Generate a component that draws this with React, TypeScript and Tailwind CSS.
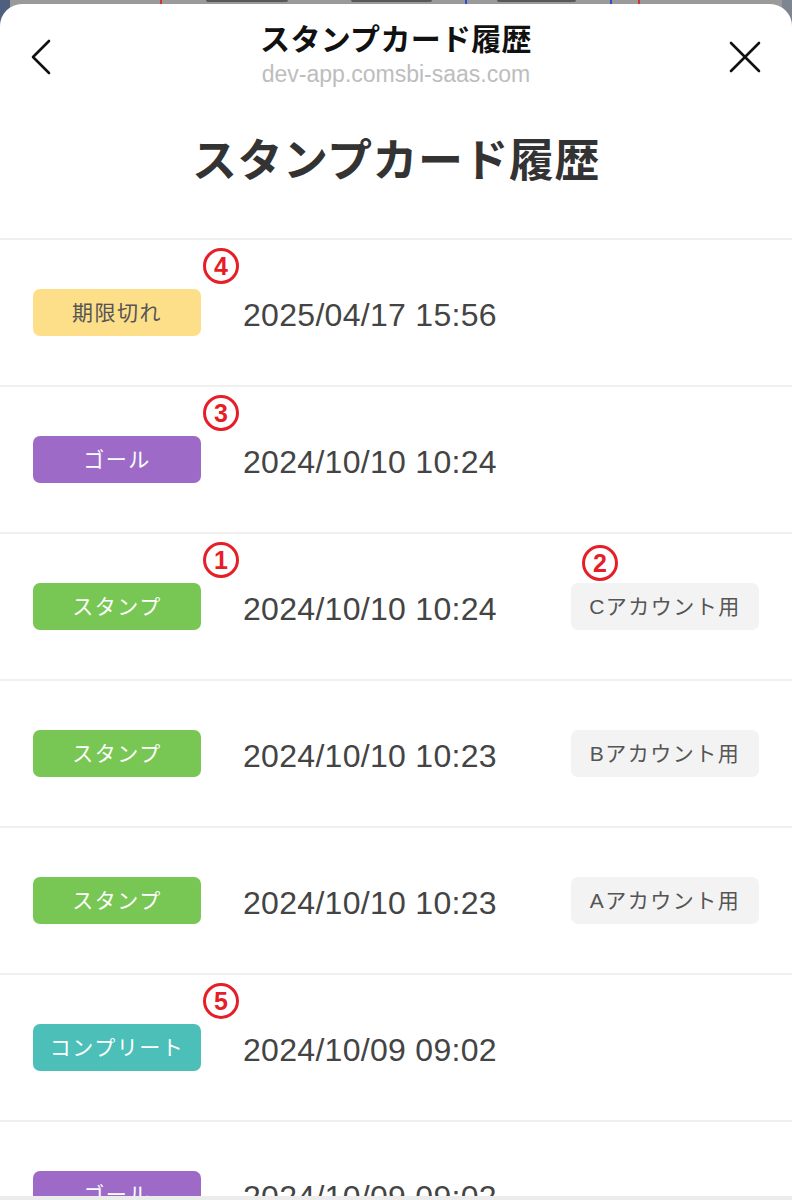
import React from "react";

type Row = {
  label: string;
  tone: string;
  date: string;
  account?: string;
  mark?: string;
  accountMark?: string;
};

const rows: Row[] = [
  { label: "期限切れ", tone: "bg-[#fddf8a] text-[#555555]", date: "2025/04/17 15:56", mark: "4" },
  { label: "ゴール", tone: "bg-[#9d6bc7] text-white", date: "2024/10/10 10:24", mark: "3" },
  { label: "スタンプ", tone: "bg-[#78c755] text-white", date: "2024/10/10 10:24", account: "Cアカウント用", mark: "1", accountMark: "2" },
  { label: "スタンプ", tone: "bg-[#78c755] text-white", date: "2024/10/10 10:23", account: "Bアカウント用" },
  { label: "スタンプ", tone: "bg-[#78c755] text-white", date: "2024/10/10 10:23", account: "Aアカウント用" },
  { label: "コンプリート", tone: "bg-[#4bbfb8] text-white", date: "2024/10/09 09:02", mark: "5" },
  { label: "ゴール", tone: "bg-[#9d6bc7] text-white", date: "2024/10/09 09:02" },
];

const font = { fontFamily: '"Liberation Sans", "Noto Sans CJK JP", sans-serif' };

const Mark = ({ n, className }: { n: string; className: string }) => (
  <span
    className={`absolute w-[36px] h-[36px] rounded-full border-[3px] border-[#e61e28] text-[#e61e28] font-bold text-[25px] leading-none flex items-center justify-center ${className}`}
  >
    {n}
  </span>
);

const HistoryRow = ({ row }: { row: Row }) => (
  <div className="relative h-[147px] border-t-2 border-[#f0f0f0] flex items-center pl-[33px] pr-[33px]">
    {row.mark && <Mark n={row.mark} className="left-[203px] top-[8px]" />}
    {row.accountMark && <Mark n={row.accountMark} className="left-[582px] top-[11px]" />}
    <span className={`w-[168px] h-[47px] rounded-[7px] flex items-center justify-center text-[21px] tracking-[1.5px] ${row.tone}`}>
      {row.label}
    </span>
    <span className="ml-[42px] mt-[4px] text-[32px] text-[#444444] tracking-[0.3px]">{row.date}</span>
    {row.account && (
      <span className="ml-auto w-[188px] h-[47px] rounded-[7px] bg-[#f3f3f3] text-[#555555] text-[21px] tracking-[1.5px] flex items-center justify-center">
        {row.account}
      </span>
    )}
  </div>
);

export default function App() {
  return (
    <div className="w-[792px] h-[1200px] overflow-hidden bg-[#9a9a9a] flex flex-col" style={font}>
      <div className="relative h-[4px] shrink-0">
        <span className="absolute left-0 top-0 h-[30px] w-[10px] bg-[#4e5f80]" />
        <span className="absolute left-[160px] top-0 h-[4px] w-[2px] bg-[#d0342c]" />
        <span className="absolute left-[206px] top-0 h-[2px] w-[82px] rounded-b bg-[#555a55]" />
        <span className="absolute left-[351px] top-0 h-[2px] w-[81px] rounded-b bg-[#555a55]" />
        <span className="absolute left-[465px] top-0 h-[4px] w-[2px] bg-[#2a4fd0]" />
        <span className="absolute left-[497px] top-0 h-[2px] w-[79px] rounded-b bg-[#555a55]" />
        <span className="absolute left-[610px] top-0 h-[4px] w-[2px] bg-[#2a4fd0]" />
        <span className="absolute left-[638px] top-0 h-[4px] w-[2px] bg-[#d0342c]" />
        <span className="absolute right-0 top-0 h-[30px] w-[10px] bg-[#7d8590]" />
      </div>
      <div className="relative flex-1 bg-white rounded-t-[22px] flex flex-col overflow-hidden">
        <header className="h-[100px] shrink-0 grid grid-cols-[80px_1fr_80px] items-center">
          <div className="flex justify-start pl-[30px] pt-[6px]">
            <svg width="22" height="36" viewBox="0 0 22 36" fill="none" stroke="#111" strokeWidth="2.6" strokeLinecap="round" strokeLinejoin="round">
              <polyline points="19,2 3,18 19,34" />
            </svg>
          </div>
          <div className="flex flex-col items-center pt-[2px]">
            <h1 className="text-[30px] leading-[34px] font-bold text-[#111111] tracking-[0.3px]">スタンプカード履歴</h1>
            <p className="mt-[3px] text-[23px] leading-[28px] text-[#bdbdbd]">dev-app.comsbi-saas.com</p>
          </div>
          <div className="flex justify-end pr-[30px] pt-[6px]">
            <svg width="34" height="34" viewBox="0 0 34 34" fill="none" stroke="#111" strokeWidth="2.6" strokeLinecap="round">
              <line x1="3" y1="3" x2="31" y2="31" />
              <line x1="31" y1="3" x2="3" y2="31" />
            </svg>
          </div>
        </header>
        <h2 className="mt-[28px] mb-[46px] text-center text-[45px] leading-[60px] font-bold text-[#333333] tracking-[0.5px]">
          スタンプカード履歴
        </h2>
        <div className="flex-1 overflow-hidden">
          {rows.map((row, i) => (
            <HistoryRow key={i} row={row} />
          ))}
        </div>
        <div className="h-[4px] shrink-0 bg-[#ececec]" />
      </div>
    </div>
  );
}
